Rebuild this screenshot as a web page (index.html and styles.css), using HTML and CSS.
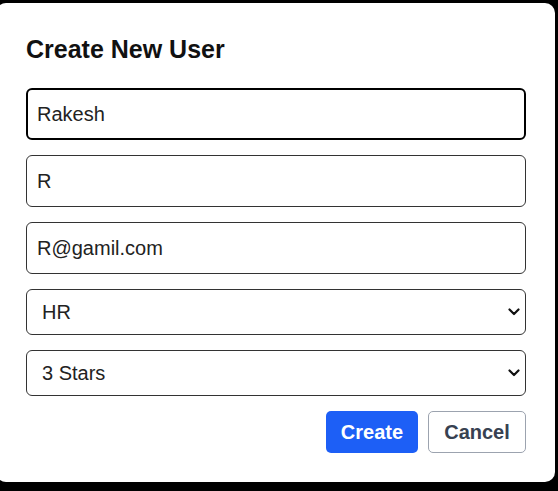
FILE: index.html
```html
<!DOCTYPE html>
<html>
<head>
<meta charset="utf-8">
<link rel="stylesheet" href="styles.css">
</head>
<body>
<div class="modal">
  <h2 class="title">Create New User</h2>
  <form class="form">
    <input class="field focused" type="text" value="Rakesh">
    <input class="field" type="text" value="R">
    <input class="field" type="text" value="R@gamil.com">
    <div class="select-wrap">
      <select class="select"><option>HR</option></select>
      <svg class="chev" width="12" height="8" viewBox="0 0 12 8"><path d="M1.5 1.5 L6 6 L10.5 1.5" fill="none" stroke="#111" stroke-width="2.2" stroke-linecap="round" stroke-linejoin="round"/></svg>
    </div>
    <div class="select-wrap">
      <select class="select"><option>3 Stars</option></select>
      <svg class="chev" width="12" height="8" viewBox="0 0 12 8"><path d="M1.5 1.5 L6 6 L10.5 1.5" fill="none" stroke="#111" stroke-width="2.2" stroke-linecap="round" stroke-linejoin="round"/></svg>
    </div>
    <div class="actions">
      <button type="button" class="btn btn-primary">Create</button>
      <button type="button" class="btn btn-secondary">Cancel</button>
    </div>
  </form>
</div>
</body>
</html>
```
FILE: styles.css
```css
html, body {
  margin: 0;
  padding: 0;
  background: #000;
  height: 100%;
  overflow: hidden;
}
body {
  padding-top: 3px;
  font-family: "Liberation Sans", Arial, sans-serif;
}
.modal {
  box-sizing: border-box;
  width: 559px;
  height: 479px;
  margin-left: -4px;
  background: #fff;
  border-radius: 10px;
  padding: 31px 29px 0 30px;
}
.title {
  margin: 0 0 24px 0;
  font-size: 25px;
  line-height: 30px;
  font-weight: bold;
  color: #111;
}
.form {
  display: flex;
  flex-direction: column;
  gap: 15px;
}
.field {
  box-sizing: border-box;
  width: 100%;
  height: 52px;
  margin: 0;
  padding: 0 10px;
  border: 1px solid #333;
  border-radius: 6px;
  font-family: "Liberation Sans", Arial, sans-serif;
  font-size: 20px;
  color: #222;
  background: #fff;
  outline: none;
}
.field.focused {
  border: 2px solid #000;
  padding: 0 9px;
}
.select-wrap {
  position: relative;
  height: 46px;
}
.select {
  appearance: none;
  -webkit-appearance: none;
  box-sizing: border-box;
  width: 100%;
  height: 46px;
  margin: 0;
  padding: 0 15px;
  border: 1px solid #333;
  border-radius: 6px;
  background: #fff;
  font-family: "Liberation Sans", Arial, sans-serif;
  font-size: 20px;
  color: #222;
  outline: none;
}
.chev {
  position: absolute;
  right: 6px;
  top: 19px;
  pointer-events: none;
}
.actions {
  display: flex;
  justify-content: flex-end;
  gap: 10px;
}
.btn {
  box-sizing: border-box;
  height: 42px;
  margin: 0;
  border-radius: 5px;
  font-family: "Liberation Sans", Arial, sans-serif;
  font-size: 20px;
  font-weight: bold;
  cursor: pointer;
}
.btn-primary {
  width: 92px;
  border: none;
  background: #1d5ff6;
  color: #fff;
}
.btn-secondary {
  width: 98px;
  border: 1px solid #9ca3af;
  background: #fff;
  color: #374151;
}
```
